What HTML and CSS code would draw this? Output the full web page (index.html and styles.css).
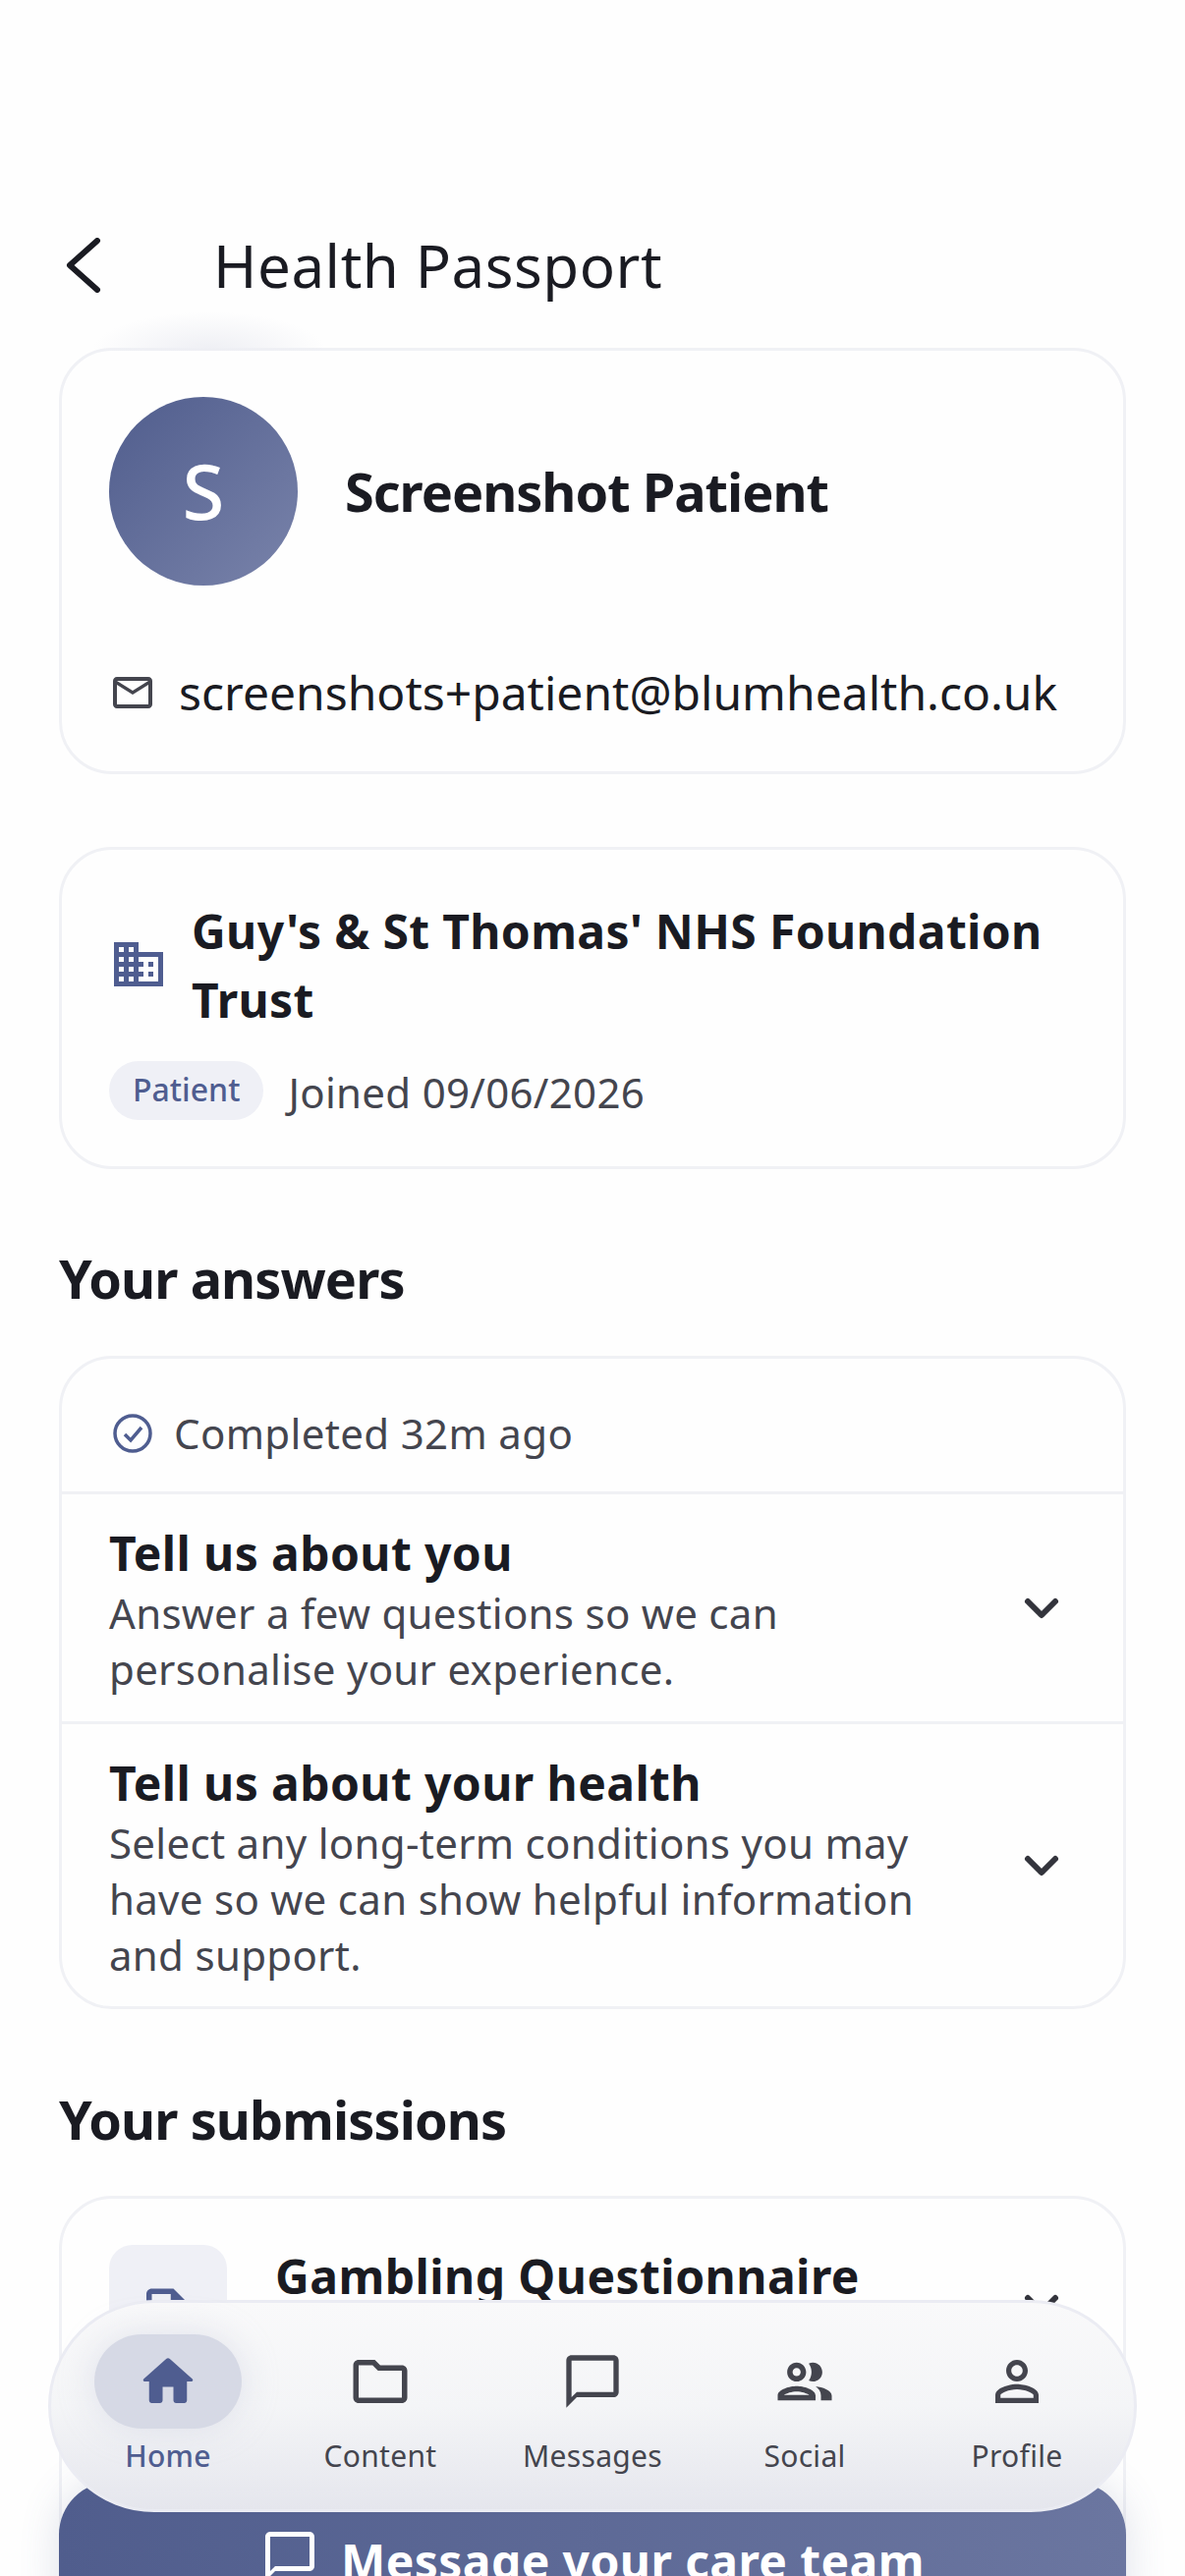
FILE: index.html
```html
<!DOCTYPE html>
<html lang="en">
<head>
    <meta charset="utf-8">
    <title>Health Passport</title>
    <link rel="stylesheet" href="styles.css">
</head>
<body>
    <section class="screen">
        <header class="topbar">
            <svg class="back-icon" viewBox="0 0 40 56"><path d="M35 3 7 28l28 25"/></svg>
            <h1 class="page-title">Health Passport</h1>
        </header>

        <section class="card profile-card">
            <div class="profile-top">
                <div class="avatar">S</div>
                <div class="profile-name">Screenshot Patient</div>
            </div>
            <div class="profile-mail">
                <svg class="mail-icon" viewBox="2 4 20 16"><path d="M20 4H4c-1.1 0-1.99.9-1.99 2L2 18c0 1.1.9 2 2 2h16c1.1 0 2-.9 2-2V6c0-1.1-.9-2-2-2zm0 14H4V8l8 5 8-5v10zm-8-7L4 6h16l-8 5z"/></svg>
                <span>screenshots+patient@blumhealth.co.uk</span>
            </div>
        </section>

        <section class="card org-card">
            <div class="org-top">
                <svg class="org-icon" viewBox="2 3 20 18"><path d="M12 7V3H2v18h20V7H12zM6 19H4v-2h2v2zm0-4H4v-2h2v2zm0-4H4V9h2v2zm0-4H4V5h2v2zm4 12H8v-2h2v2zm0-4H8v-2h2v2zm0-4H8V9h2v2zm0-4H8V5h2v2zm10 12h-8v-2h2v-2h-2v-2h2v-2h-2V9h8v10zm-2-8h-2v2h2v-2zm0 4h-2v2h2v-2z"/></svg>
                <div class="org-name">Guy's &amp; St Thomas' NHS Foundation Trust</div>
            </div>
            <div class="org-meta">
                <span class="pill">Patient</span>
                <span class="joined">Joined 09/06/2026</span>
            </div>
        </section>

        <h2 class="section-title answers-title">Your answers</h2>
        <section class="card answers-card">
            <div class="completed">
                <svg class="check-icon" viewBox="0 0 40 40"><circle cx="20" cy="20" r="18"/><path d="m12 21 6 6 11-13"/></svg>
                <span>Completed 32m ago</span>
            </div>
            <div class="answer-row row-short">
                <div class="answer-text">
                    <div class="answer-title">Tell us about you</div>
                    <div class="answer-desc">Answer a few questions so we can personalise your experience.</div>
                </div>
                <svg class="chevron" viewBox="0 0 40 26"><path d="m6 5 14 14L34 5"/></svg>
            </div>
            <div class="answer-row row-tall">
                <div class="answer-text">
                    <div class="answer-title">Tell us about your health</div>
                    <div class="answer-desc">Select any long-term conditions you may have so we can show helpful information and support.</div>
                </div>
                <svg class="chevron" viewBox="0 0 40 26"><path d="m6 5 14 14L34 5"/></svg>
            </div>
        </section>

        <h2 class="section-title submissions-title">Your submissions</h2>
        <section class="card submission-card">
            <div class="doc-tile">
                <svg class="doc-icon" viewBox="0 0 24 24"><path d="M14 2H6c-1.1 0-2 .9-2 2v16c0 1.1.9 2 2 2h12c1.100 0 2-.9 2-2V8l-6-6zM6 20V4h7v5h5v11H6z"/></svg>
            </div>
            <div class="submission-name">Gambling Questionnaire</div>
            <svg class="chevron chevron-low" viewBox="0 0 40 26"><path d="m6 5 14 14L34 5"/></svg>
        </section>
    </section>

    <div class="cta">
        <svg class="cta-icon" viewBox="0 0 24 24"><path d="M20 2H4c-1.100 0-2 .9-2 2v18l4-4h14c1.100 0 2-.9 2-2V4c0-1.100-.9-2-2-2zm0 14H6l-2 2V4h16v12z"/></svg>
        <span>Message your care team</span>
    </div>

    <nav class="tabbar">
        <div class="tab tab-active">
            <div class="tab-icon-wrap">
                <svg class="tab-icon" viewBox="0 0 24 24"><path d="M10 19v-5h4v5c0 .55.45 1 1 1h3c.55 0 1-.45 1-1v-7h1.700c.46 0 .68-.57.33-.87L12.670 3.600c-.38-.34-.96-.34-1.340 0l-8.360 7.530c-.34.3-.13.87.33.87H5v7c0 .55.45 1 1 1h3c.55 0 1-.45 1-1z"/></svg>
            </div>
            <span>Home</span>
        </div>
        <div class="tab">
            <div class="tab-icon-wrap">
                <svg class="tab-icon" viewBox="0 0 24 24"><path d="M9.170 6l2 2H20v10H4V6h5.170M10 4H4c-1.100 0-1.990.9-1.990 2L2 18c0 1.100.9 2 2 2h16c1.100 0 2-.9 2-2V8c0-1.100-.9-2-2-2h-8l-2-2z"/></svg>
            </div>
            <span>Content</span>
        </div>
        <div class="tab">
            <div class="tab-icon-wrap">
                <svg class="tab-icon icon-chat" viewBox="0 0 24 24"><path d="M20 2H4c-1.100 0-2 .9-2 2v18l4-4h14c1.100 0 2-.9 2-2V4c0-1.100-.9-2-2-2zm0 14H6l-2 2V4h16v12z"/></svg>
            </div>
            <span>Messages</span>
        </div>
        <div class="tab">
            <div class="tab-icon-wrap">
                <svg class="tab-icon" viewBox="0 0 24 24"><path d="M9 13.750c-2.340 0-7 1.170-7 3.500V19h14v-1.750c0-2.330-4.660-3.500-7-3.500zM4.340 17c.84-.58 2.870-1.250 4.660-1.250s3.820.67 4.660 1.250H4.340zM9 12c1.930 0 3.500-1.570 3.500-3.500S10.930 5 9 5 5.500 6.570 5.500 8.500 7.070 12 9 12zm0-5c.83 0 1.500.67 1.500 1.500S9.830 10 9 10s-1.500-.67-1.500-1.500S8.170 7 9 7zm7.040 6.810c1.160.84 1.960 1.960 1.960 3.440V19h4v-1.750c0-2.020-3.500-3.170-5.960-3.440zM15 12c1.930 0 3.500-1.570 3.500-3.500S16.930 5 15 5c-.54 0-1.040.13-1.500.35.63.89 1 1.980 1 3.150s-.37 2.260-1 3.150c.46.22.96.35 1.500.35z"/></svg>
            </div>
            <span>Social</span>
        </div>
        <div class="tab">
            <div class="tab-icon-wrap">
                <svg class="tab-icon" viewBox="0 0 24 24"><path d="M12 5.900c1.160 0 2.100.94 2.100 2.100s-.94 2.100-2.100 2.100S9.900 9.160 9.900 8s.94-2.100 2.100-2.100m0 9c2.970 0 6.100 1.460 6.100 2.100v1.100H5.900V17c0-.64 3.130-2.100 6.100-2.100M12 4C9.790 4 8 5.790 8 8s1.790 4 4 4 4-1.790 4-4-1.790-4-4-4zm0 9c-2.670 0-8 1.340-8 4v3h16v-3c0-2.660-5.330-4-8-4z"/></svg>
            </div>
            <span>Profile</span>
        </div>
    </nav>
</body>
</html>
```

FILE: styles.css
```css
html, body {
    margin: 0;
    padding: 0;
}
body {
    position: relative;
    width: 1206px;
    height: 2622px;
    overflow: hidden;
    background: #fefefe;
    color: #1a1b22;
    font-family: "Noto Sans", sans-serif;
}
.screen {
    padding: 0 60px;
}

/* header */
.topbar {
    display: flex;
    align-items: center;
    height: 120px;
    padding-top: 210px;
    margin-bottom: 24px;
}
.back-icon {
    width: 40px;
    height: 56px;
    margin-left: 4px;
    fill: none;
    stroke: #1a1b22;
    stroke-width: 6;
    stroke-linecap: round;
    stroke-linejoin: round;
}
.page-title {
    margin: 0 0 0 113px;
    font-size: 60px;
    font-weight: 400;
    letter-spacing: 0.55px;
    line-height: 76px;
}

/* cards */
.card {
    position: relative;
    box-sizing: border-box;
    border: 3px solid #f0f1f5;
    border-radius: 54px;
    background: #fefefe;
}
.profile-card {
    height: 434px;
    padding: 47px 48px;
    margin-bottom: 74px;
}
.profile-card::before {
    content: "";
    position: absolute;
    left: 30px;
    top: -40px;
    width: 240px;
    height: 40px;
    background: radial-gradient(ellipse at 50% 100%, #eeeff4 0%, rgba(241, 242, 246, 0) 70%);
}
.profile-top {
    display: flex;
    align-items: center;
    gap: 48px;
}
.avatar {
    display: flex;
    align-items: center;
    justify-content: center;
    width: 192px;
    height: 192px;
    padding-bottom: 3px;
    box-sizing: border-box;
    border-radius: 50%;
    background: linear-gradient(135deg, #505d8d, #7983aa);
    color: #fff;
    font-size: 78px;
    font-weight: 500;
}
.profile-name {
    font-size: 54px;
    font-weight: 700;
    letter-spacing: -1px;
}
.profile-mail {
    display: flex;
    align-items: center;
    gap: 27px;
    margin-top: 74px;
    font-size: 48px;
    line-height: 70px;
}
.mail-icon {
    width: 40px;
    height: 32px;
    margin-left: 4px;
    fill: #44454e;
}

.org-card {
    height: 328px;
    padding: 48px 48px 0;
    margin-bottom: 74px;
}
.org-top {
    display: flex;
    align-items: center;
    gap: 29px;
}
.org-icon {
    flex: none;
    width: 50px;
    height: 45px;
    margin: 0 0 4px 5px;
    fill: #4f5d90;
}
.org-name {
    font-size: 48px;
    font-weight: 700;
    letter-spacing: 0.35px;
    line-height: 70px;
}
.org-meta {
    display: flex;
    align-items: center;
    gap: 25px;
    margin-top: 27px;
}
.pill {
    padding: 0 24px;
    height: 60px;
    border-radius: 30px;
    background: #eff0f6;
    color: #4f5d90;
    font-size: 32px;
    font-weight: 500;
    line-height: 58px;
}
.joined {
    padding-top: 2px;
    color: #44454e;
    font-size: 42px;
    letter-spacing: 0.3px;
}

.section-title {
    margin: 0;
    font-size: 54px;
    font-weight: 700;
    letter-spacing: -0.9px;
    line-height: 74px;
}
.answers-title {
    margin-bottom: 42px;
}
.submissions-title {
    margin-bottom: 41px;
}

/* answers */
.answers-card {
    height: 665px;
    margin-bottom: 75px;
}
.completed {
    box-sizing: border-box;
    display: flex;
    align-items: center;
    gap: 22px;
    height: 135px;
    padding: 16px 48px 0 52px;
    color: #44454e;
    font-size: 42px;
    letter-spacing: 0.35px;
}
.check-icon {
    width: 40px;
    height: 40px;
    fill: none;
    stroke: #4f5d90;
    stroke-width: 3.5;
}
.answer-row {
    display: flex;
    align-items: center;
    justify-content: space-between;
    padding: 0 48px;
    border-top: 3px solid #f0f1f5;
}
.row-short {
    height: 231px;
}
.row-short .answer-text {
    margin-top: 3px;
}
.row-tall {
    height: 287px;
}
.row-tall .answer-text {
    margin-top: 4px;
}
.answer-text {
    width: 840px;
}
.answer-title {
    font-size: 48px;
    font-weight: 700;
    letter-spacing: 0.4px;
    line-height: 64px;
}
.answer-desc {
    color: #44454e;
    font-size: 42px;
    letter-spacing: 0.3px;
    line-height: 57px;
}
.chevron {
    flex: none;
    width: 40px;
    height: 26px;
    margin: 3px 15px 0 0;
    fill: none;
    stroke: #33343c;
    stroke-width: 6;
    stroke-linecap: round;
    stroke-linejoin: round;
}

/* submissions */
.submission-card {
    display: flex;
    align-items: flex-start;
    height: 400px;
    padding: 47px 48px;
}
.doc-tile {
    display: flex;
    align-items: center;
    justify-content: center;
    width: 120px;
    height: 120px;
    border-radius: 24px;
    background: #eff0f6;
}
.doc-icon {
    width: 66px;
    height: 66px;
    margin-top: 24px;
    fill: #4f5d90;
}
.submission-name {
    margin: -3px 0 0 49px;
    font-size: 48px;
    font-weight: 700;
    letter-spacing: 0.45px;
    line-height: 70px;
}
.chevron-low {
    margin-left: auto;
    margin-top: 49px;
}

/* bottom overlay */
.cta {
    position: absolute;
    left: 60px;
    top: 2526px;
    box-sizing: border-box;
    display: flex;
    align-items: center;
    justify-content: center;
    gap: 22px;
    width: 1086px;
    height: 160px;
    border-radius: 54px;
    background: linear-gradient(90deg, #505d8d, #6b76a0);
    box-shadow: 0 0 40px rgba(80, 93, 141, 0.18);
    color: #fff;
    font-size: 48px;
    font-weight: 700;
    letter-spacing: 0.4px;
}
.cta-icon {
    width: 60px;
    height: 60px;
    margin-bottom: 8px;
    fill: #fff;
}
.tabbar {
    position: absolute;
    left: 49px;
    top: 2341px;
    box-sizing: border-box;
    display: flex;
    justify-content: center;
    width: 1108px;
    height: 216px;
    border: 3px solid #ebecf3;
    border-radius: 108px;
    background: linear-gradient(180deg, #f9f9fa, #f4f5f7 50%, #e5e6ed);
}
.tab {
    display: flex;
    flex-direction: column;
    align-items: center;
    width: 216px;
    padding-top: 32px;
    color: #44454e;
    font-size: 30px;
    letter-spacing: 0.3px;
}
.tab-icon-wrap {
    display: flex;
    align-items: center;
    justify-content: center;
    width: 150px;
    height: 96px;
    margin-bottom: 7px;
    border-radius: 48px;
}
.tab-active {
    color: #4f5d90;
    font-weight: 500;
}
.tab-active .tab-icon-wrap {
    background: #d6d9e5;
    box-shadow: 0 0 36px rgba(214, 217, 229, 0.7);
}
.tab-icon {
    width: 66px;
    height: 66px;
    fill: #44454e;
}
.tab-active .tab-icon {
    fill: #4f5d90;
}
.icon-chat {
    width: 64px;
    height: 64px;
}
```
